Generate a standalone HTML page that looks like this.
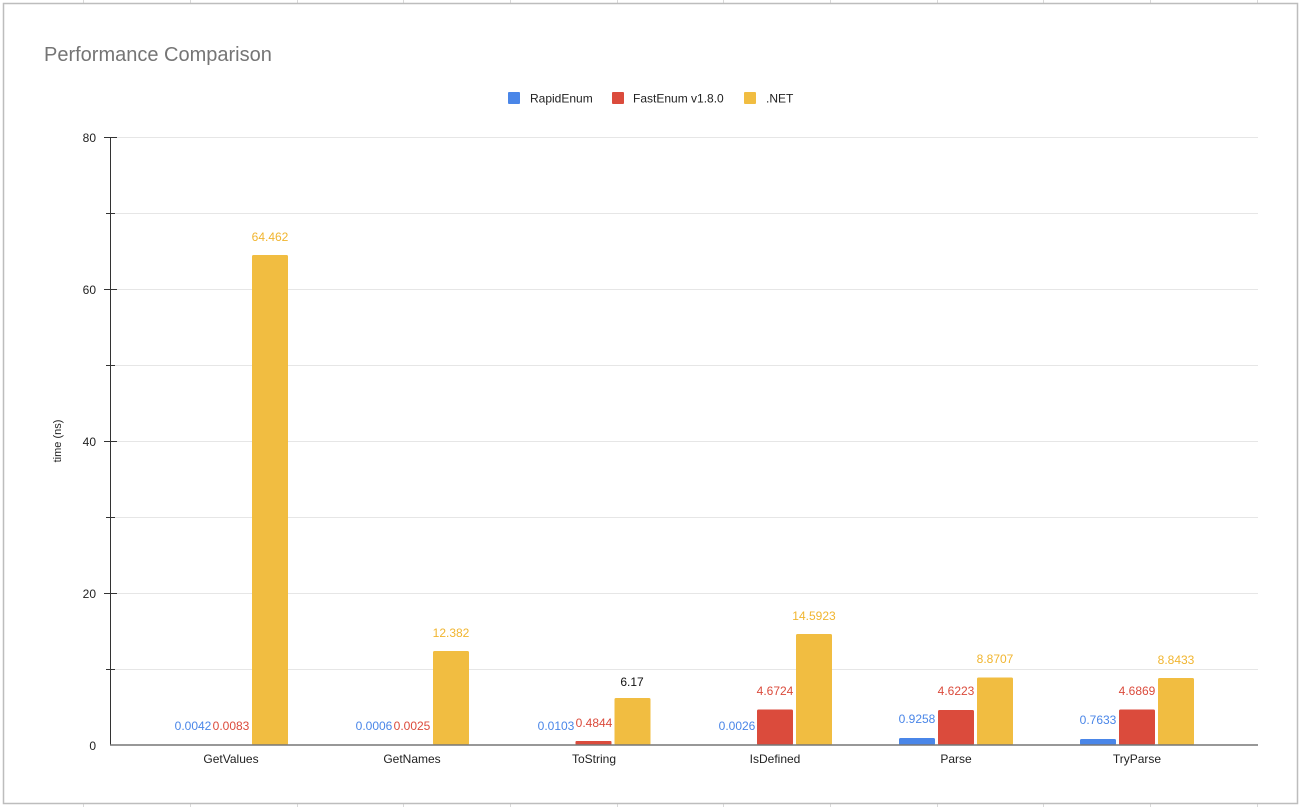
<!DOCTYPE html>
<html><head><meta charset="utf-8"><style>
html,body{margin:0;padding:0;background:#fff;}
svg{display:block;font-family:"Liberation Sans",Arial,sans-serif;}
</style></head><body>
<svg width="1300" height="807" viewBox="0 0 1300 807" xmlns="http://www.w3.org/2000/svg">
<rect width="1300" height="807" fill="#fff"/>
<g stroke="#d9d9d9" stroke-width="1">
<line x1="83.5" y1="0" x2="83.5" y2="4"/><line x1="190.5" y1="0" x2="190.5" y2="4"/><line x1="297.5" y1="0" x2="297.5" y2="4"/><line x1="403.5" y1="0" x2="403.5" y2="4"/><line x1="510.5" y1="0" x2="510.5" y2="4"/><line x1="617.5" y1="0" x2="617.5" y2="4"/><line x1="723.5" y1="0" x2="723.5" y2="4"/><line x1="830.5" y1="0" x2="830.5" y2="4"/><line x1="937.5" y1="0" x2="937.5" y2="4"/><line x1="1043.5" y1="0" x2="1043.5" y2="4"/><line x1="1150.5" y1="0" x2="1150.5" y2="4"/><line x1="1257.5" y1="0" x2="1257.5" y2="4"/>
<line x1="83.5" y1="803" x2="83.5" y2="807"/><line x1="190.5" y1="803" x2="190.5" y2="807"/><line x1="297.5" y1="803" x2="297.5" y2="807"/><line x1="403.5" y1="803" x2="403.5" y2="807"/><line x1="510.5" y1="803" x2="510.5" y2="807"/><line x1="617.5" y1="803" x2="617.5" y2="807"/><line x1="723.5" y1="803" x2="723.5" y2="807"/><line x1="830.5" y1="803" x2="830.5" y2="807"/><line x1="937.5" y1="803" x2="937.5" y2="807"/><line x1="1043.5" y1="803" x2="1043.5" y2="807"/><line x1="1150.5" y1="803" x2="1150.5" y2="807"/><line x1="1257.5" y1="803" x2="1257.5" y2="807"/>
</g>
<rect x="3.5" y="3.5" width="1294" height="800" fill="#fff" stroke="#bdbdbd" stroke-width="1.5"/>
<text x="44" y="61" font-size="20" fill="#757575">Performance Comparison</text>
<rect x="508" y="92" width="12" height="12" rx="1" fill="#4a86e8"/>
<text x="530" y="102.5" font-size="12" fill="#222">RapidEnum</text>
<rect x="612" y="92" width="12" height="12" rx="1" fill="#db4b3c"/>
<text x="633" y="102.5" font-size="12" fill="#222">FastEnum v1.8.0</text>
<rect x="744" y="92" width="12" height="12" rx="1" fill="#f1bd41"/>
<text x="766" y="102.5" font-size="12" fill="#222">.NET</text>
<g stroke="#e6e6e6" stroke-width="1">
<line x1="110" y1="137.5" x2="1258" y2="137.5"/><line x1="110" y1="213.5" x2="1258" y2="213.5"/><line x1="110" y1="289.5" x2="1258" y2="289.5"/><line x1="110" y1="365.5" x2="1258" y2="365.5"/><line x1="110" y1="441.5" x2="1258" y2="441.5"/><line x1="110" y1="517.5" x2="1258" y2="517.5"/><line x1="110" y1="593.5" x2="1258" y2="593.5"/><line x1="110" y1="669.5" x2="1258" y2="669.5"/>
</g>
<g stroke="#333" stroke-width="1">
<line x1="110.5" y1="137" x2="110.5" y2="745"/>
<line x1="104" y1="137.5" x2="117" y2="137.5"/><line x1="106" y1="213.5" x2="115" y2="213.5"/><line x1="104" y1="289.5" x2="117" y2="289.5"/><line x1="106" y1="365.5" x2="115" y2="365.5"/><line x1="104" y1="441.5" x2="117" y2="441.5"/><line x1="106" y1="517.5" x2="115" y2="517.5"/><line x1="104" y1="593.5" x2="117" y2="593.5"/><line x1="106" y1="669.5" x2="115" y2="669.5"/>
</g>
<g font-size="12" fill="#222" text-anchor="end">
<text x="96" y="142">80</text><text x="96" y="294">60</text><text x="96" y="446">40</text><text x="96" y="598">20</text><text x="96" y="750">0</text>
</g>
<text transform="translate(61,441) rotate(-90)" font-size="11" fill="#222" text-anchor="middle">time (ns)</text>
<g fill="#4a86e8">
<rect x="1080" y="739" width="36" height="6" rx="1.5"/>
<rect x="899" y="738" width="36" height="7" rx="1.5"/>
</g>
<g fill="#db4b3c">
<rect x="575.5" y="741" width="36" height="4" rx="1"/>
<rect x="757" y="709.5" width="36" height="35.5" rx="1.5"/>
<rect x="938" y="710" width="36" height="35" rx="1.5"/>
<rect x="1119" y="709.5" width="36" height="35.5" rx="1.5"/>
</g>
<g fill="#f1bd41">
<rect x="252" y="255" width="36" height="490" rx="1.5"/>
<rect x="433" y="651" width="36" height="94" rx="1.5"/>
<rect x="614.5" y="698" width="36" height="47" rx="1.5"/>
<rect x="796" y="634" width="36" height="111" rx="1.5"/>
<rect x="977" y="677.5" width="36" height="67.5" rx="1.5"/>
<rect x="1158" y="678" width="36" height="67" rx="1.5"/>
</g>
<line x1="110" y1="745" x2="1258" y2="745" stroke="#777" stroke-width="1.5"/>
<g font-size="12" text-anchor="middle">
<g fill="#4a86e8">
<text x="193" y="730">0.0042</text><text x="374" y="730">0.0006</text><text x="556" y="730">0.0103</text><text x="737" y="730">0.0026</text><text x="917" y="723">0.9258</text><text x="1098" y="724">0.7633</text>
</g>
<g fill="#db4b3c">
<text x="231" y="730">0.0083</text><text x="412" y="730">0.0025</text><text x="594" y="727">0.4844</text><text x="775" y="695">4.6724</text><text x="956" y="695">4.6223</text><text x="1137" y="695">4.6869</text>
</g>
<g fill="#f1b52f">
<text x="270" y="241">64.462</text><text x="451" y="637">12.382</text><text x="814" y="620">14.5923</text><text x="995" y="663">8.8707</text><text x="1176" y="664">8.8433</text>
</g>
<text x="632" y="686" fill="#111">6.17</text>
</g>
<g font-size="12" fill="#222" text-anchor="middle">
<text x="231" y="763">GetValues</text><text x="412" y="763">GetNames</text><text x="594" y="763">ToString</text><text x="775" y="763">IsDefined</text><text x="956" y="763">Parse</text><text x="1137" y="763">TryParse</text>
</g>
</svg>
</body></html>
